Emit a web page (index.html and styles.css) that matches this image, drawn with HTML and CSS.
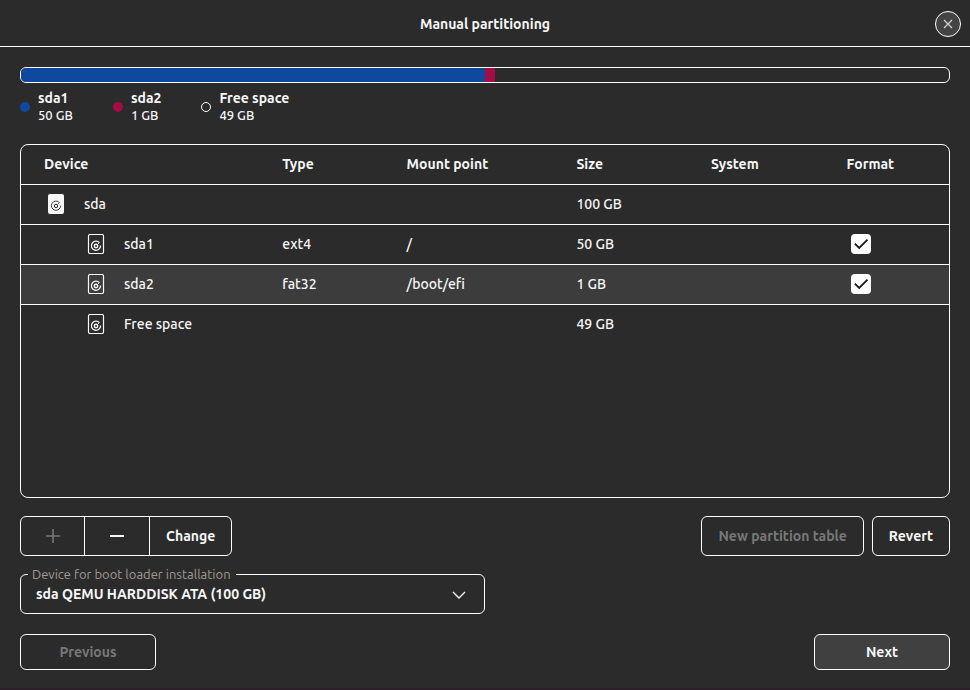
FILE: index.html
```html
<!DOCTYPE html>
<html lang="en">
<head>
<meta charset="utf-8">
<meta name="viewport" content="width=device-width, initial-scale=1">
<title>Manual partitioning</title>
<link rel="stylesheet" href="styles.css">
</head>
<body>
<svg width="0" height="0" class="sprite" aria-hidden="true">
  <symbol id="disk" viewBox="0 0 20 20">
    <rect x="2.5" y="0.5" width="15" height="19" rx="1.5" fill="none" stroke="currentColor" stroke-width="1.2"/>
    <path d="M13.4 8.6A4.6 4.6 0 1 0 14.6 11.6" fill="none" stroke="currentColor" stroke-width="1.3"/>
    <path d="M11.4 10.6L13.4 8.6" stroke="currentColor" stroke-width="1"/>
    <circle cx="10" cy="12" r="1.7" fill="none" stroke="currentColor" stroke-width="1.4"/>
  </symbol>
  <symbol id="disk-filled" viewBox="0 0 20 20">
    <rect x="2" y="0" width="16" height="20" rx="2" fill="currentColor"/>
    <path d="M13.4 8.6A4.6 4.6 0 1 0 14.6 11.6" fill="none" stroke="#2b2b2b" stroke-width="0.9"/>
    <path d="M11.4 10.6L13.4 8.6" stroke="#2b2b2b" stroke-width="0.7"/>
    <circle cx="10" cy="12" r="1.7" fill="none" stroke="#2b2b2b" stroke-width="1"/>
  </symbol>
</svg>
<header class="titlebar">
  <h1>Manual partitioning</h1>
  <button class="close" type="button" aria-label="Close">
    <svg width="10" height="10" viewBox="0 0 10 10"><path d="M1 1l8 8M9 1L1 9" stroke="currentColor" stroke-width="1.1"/></svg>
  </button>
</header>
<main>
  <div class="usage">
    <div class="part sda1"></div>
    <div class="part sda2"></div>
  </div>
  <ul class="legend">
    <li><i class="dot sda1"></i><div><strong>sda1</strong><span>50 GB</span></div></li>
    <li><i class="dot sda2"></i><div><strong>sda2</strong><span>1 GB</span></div></li>
    <li><i class="dot free"></i><div><strong>Free space</strong><span>49 GB</span></div></li>
  </ul>
  <div class="devices">
    <table>
      <colgroup><col class="c-device"><col class="c-type"><col class="c-mount"><col class="c-size"><col class="c-system"><col class="c-format"></colgroup>
      <thead>
        <tr><th>Device</th><th>Type</th><th>Mount point</th><th>Size</th><th>System</th><th>Format</th></tr>
      </thead>
      <tbody>
        <tr><td><div class="device"><svg class="icon"><use href="#disk-filled"/></svg>sda</div></td><td></td><td></td><td>100 GB</td><td></td><td></td></tr>
        <tr><td><div class="device child"><svg class="icon"><use href="#disk"/></svg>sda1</div></td><td>ext4</td><td>/</td><td>50 GB</td><td></td><td><label class="check"><input type="checkbox" checked aria-label="Format sda1"><svg viewBox="0 0 20 20"><path d="M3.8 9.6l4.4 4.4L16.5 5.6" fill="none" stroke="#1a1a1a" stroke-width="1.8"/></svg></label></td></tr>
        <tr class="selected"><td><div class="device child"><svg class="icon"><use href="#disk"/></svg>sda2</div></td><td>fat32</td><td>/boot/efi</td><td>1 GB</td><td></td><td><label class="check"><input type="checkbox" checked aria-label="Format sda2"><svg viewBox="0 0 20 20"><path d="M3.8 9.6l4.4 4.4L16.5 5.6" fill="none" stroke="#1a1a1a" stroke-width="1.8"/></svg></label></td></tr>
        <tr><td><div class="device child"><svg class="icon"><use href="#disk"/></svg>Free space</div></td><td></td><td></td><td>49 GB</td><td></td><td></td></tr>
      </tbody>
    </table>
  </div>
  <div class="actions">
    <div class="group">
      <button type="button" aria-label="Add" disabled><svg width="14" height="14" viewBox="0 0 14 14"><path d="M7 0v14M0 7h14" stroke="currentColor" stroke-width="1.6"/></svg></button>
      <button type="button" aria-label="Remove"><svg width="14" height="14" viewBox="0 0 14 14"><path d="M0 7h14" stroke="currentColor" stroke-width="2"/></svg></button>
      <button type="button">Change</button>
    </div>
    <div class="right">
      <button class="btn" type="button" disabled>New partition table</button>
      <button class="btn" type="button">Revert</button>
    </div>
  </div>
  <div class="field">
    <label for="boot">Device for boot loader installation</label>
    <select id="boot"><option>sda QEMU HARDDISK ATA (100 GB)</option></select>
    <svg class="chevron" width="14" height="8" viewBox="0 0 14 8"><path d="M1 1l6 6 6-6" fill="none" stroke="currentColor" stroke-width="1.4"/></svg>
  </div>
  <footer>
    <button class="btn nav" type="button" disabled>Previous</button>
    <button class="btn nav primary" type="button">Next</button>
  </footer>
</main>
</body>
</html>
```
FILE: styles.css
```css
* { box-sizing: border-box; }
:root {
  --bg: #2b2b2b;
  --line: #fff;
  --text: #f7f7f7;
  --blue: #0e499f;
  --red: #a30d45;
  --muted: #787878;
}
body {
  margin: 0;
  min-height: 100vh;
  display: flex;
  flex-direction: column;
  background: var(--bg);
  color: var(--text);
  font: 500 14px/20px Ubuntu, "Noto Sans", sans-serif;
  border-bottom: 2px solid #2c1f2a;
}
.sprite { position: absolute; }
svg { display: block; }
button, select { font: inherit; font-weight: 700; color: inherit; }
.titlebar {
  display: grid;
  grid-template-columns: 1fr auto 1fr;
  align-items: center;
  height: 47px;
  padding: 1px 9px 0;
  border-bottom: 1px solid var(--line);
}
h1 { grid-column: 2; margin: 0; font-size: 14px; font-weight: 700; }
.close {
  justify-self: end;
  display: grid;
  place-items: center;
  width: 26px;
  height: 26px;
  padding: 0;
  border: 1px solid var(--line);
  border-radius: 50%;
  background: #444;
  color: #d8d8d8;
}
main { flex: 1; display: flex; flex-direction: column; padding: 20px 20px 18px; }
.usage {
  display: flex;
  height: 16px;
  border: 1px solid var(--line);
  border-radius: 6px;
  overflow: hidden;
}
.sda1 { background: var(--blue); }
.sda2 { background: var(--red); }
.part.sda1 { width: 50%; }
.part.sda2 { width: 1.1%; }
.legend { display: flex; gap: 40px; margin: 5px 0 0; padding: 0; list-style: none; }
.legend li { display: flex; align-items: center; gap: 8px; }
.legend strong { display: block; font-weight: 700; line-height: 20px; }
.legend span { display: block; font-size: 13px; line-height: 14px; }
.dot { width: 10px; height: 10px; margin-top: 4px; border-radius: 50%; }
.dot.free { border: 1px solid var(--line); }
.devices {
  flex: 1;
  margin-top: 22px;
  border: 1px solid var(--line);
  border-radius: 8px;
  overflow: hidden;
}
table { width: 100%; table-layout: fixed; border-collapse: separate; border-spacing: 0; }
.c-device { width: 26%; }
.c-type { width: 13.4%; }
.c-mount { width: 18.3%; }
.c-size { width: 14.5%; }
.c-system { width: 14.6%; }
th, td { height: 40px; padding: 0 0 1px 20px; text-align: left; border-bottom: 1px solid var(--line); }
th:first-child, td:first-child { padding-left: 23px; }
th { font-weight: 700; }
tbody tr:last-child td { border-bottom: 0; padding-bottom: 2px; }
.selected { background: #3c3c3c; }
.device { display: flex; align-items: center; gap: 18px; padding-left: 2px; }
.child { padding-left: 42px; }
.icon { width: 20px; height: 20px; }
.check { display: grid; width: 20px; height: 20px; margin-left: 5px; }
.check input { grid-area: 1/1; appearance: none; width: 20px; height: 20px; margin: 0; border-radius: 4px; background: #fff; }
.check svg { grid-area: 1/1; width: 20px; height: 20px; pointer-events: none; }
.actions { display: flex; justify-content: space-between; margin-top: 18px; }
.group { display: flex; border: 1px solid var(--line); border-radius: 6px; }
.group button {
  display: grid;
  place-items: center;
  min-width: 63px;
  height: 38px;
  padding: 0 16px;
  border: 0;
  background: none;
}
.group button + button { min-width: 65px; border-left: 1px solid var(--line); }
.right { display: flex; gap: 8px; }
.btn { height: 40px; padding: 0 16px; border: 1px solid var(--line); border-radius: 6px; background: none; }
button:disabled { color: var(--muted); }
.field { position: relative; width: 50%; margin-top: 18px; }
.field label {
  position: absolute;
  top: -8px;
  left: 8px;
  padding: 0 5px 0 4px;
  background: var(--bg);
  color: #a09a92;
  font-size: 13px;
  font-weight: 400;
  line-height: 16px;
}
select {
  display: block;
  appearance: none;
  width: 100%;
  height: 40px;
  padding: 0 40px 0 15px;
  border: 1px solid var(--line);
  border-radius: 6px;
  background: var(--bg);
}
.chevron { position: absolute; right: 19px; top: 17px; pointer-events: none; }
footer { display: flex; justify-content: space-between; margin-top: 20px; }
.nav { width: 136px; height: 36px; }
.primary { background: #404040; }
```
